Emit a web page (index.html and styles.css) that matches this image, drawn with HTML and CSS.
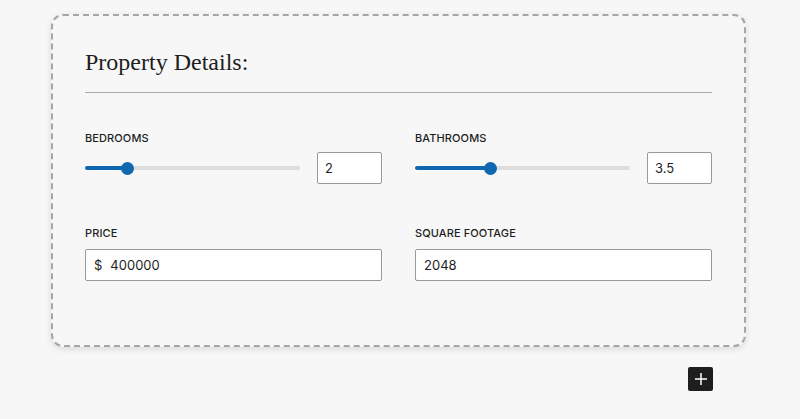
FILE: index.html
```html
<!DOCTYPE html>
<html lang="en">
<head>
<meta charset="utf-8">
<title>Property Details</title>
<link rel="stylesheet" href="styles.css">
</head>
<body>
<div class="wrap">
  <section class="card">
    <h2 class="title">Property Details:</h2>
    <hr class="sep">
    <div class="grid">
      <div class="field">
        <label class="label">Bedrooms</label>
        <div class="slider-row">
          <input class="range" type="range" min="0" max="1000" value="180" style="--p:19.9%">
          <input class="num" type="text" value="2">
        </div>
      </div>
      <div class="field">
        <label class="label">Bathrooms</label>
        <div class="slider-row">
          <input class="range" type="range" min="0" max="1000" value="342" style="--p:35.2%">
          <input class="num" type="text" value="3.5">
        </div>
      </div>
      <div class="field">
        <label class="label">Price</label>
        <div class="text-box"><span class="prefix">$</span><input class="plain" type="text" value="400000"></div>
      </div>
      <div class="field">
        <label class="label">Square Footage</label>
        <div class="text-box"><input class="plain" type="text" value="2048"></div>
      </div>
    </div>
  </section>
  <div class="add-row">
    <button class="add" type="button" aria-label="Add block">
      <svg width="24" height="24" viewBox="0 0 24 24"><path d="M12 6v12M6 12h12" stroke="#fff" stroke-width="1.5" fill="none"/></svg>
    </button>
  </div>
</div>
</body>
</html>
```

FILE: styles.css
```css
* { box-sizing: border-box; }
html, body { margin: 0; padding: 0; background: #f7f7f7; }
body { font-family: Inter, "Noto Sans", sans-serif; color: #1e1e1e; }

.wrap { padding: 14px 54px 0 51px; }

.card {
  border: 2px dashed #a6a6a6;
  border-radius: 12px;
  background: #f7f7f7;
  box-shadow: 0 2px 6px rgba(0,0,0,0.12);
  padding: 30px 32px 64px 32px;
}

.title {
  margin: 0;
  font-family: "Liberation Serif", serif;
  font-weight: 400;
  font-size: 24px;
  line-height: 32px;
  color: #1e1e1e;
}

.sep {
  margin: 14px 0 0 0;
  border: 0;
  border-top: 1px solid #a9a9a9;
  height: 0;
}

.grid {
  display: grid;
  grid-template-columns: 1fr 1fr;
  column-gap: 33px;
  row-gap: 41px;
  margin-top: 37px;
}

.field { display: flex; flex-direction: column; }

.label {
  font-size: 11px;
  font-weight: 500;
  text-transform: uppercase;
  line-height: 16px;
  margin-bottom: 6px;
  letter-spacing: 0.1px;
}
.field-lower .label { margin-bottom: 8px; }

.slider-row { display: flex; align-items: center; gap: 17px; }

.range {
  -webkit-appearance: none;
  appearance: none;
  flex: 1;
  margin: 0;
  height: 32px;
  background: transparent;
}
.range::-webkit-slider-runnable-track {
  height: 4px;
  border-radius: 2px;
  background: linear-gradient(to right, #1068b0 0, #1068b0 var(--p), #dddddd var(--p), #dddddd 100%);
}
.range::-webkit-slider-thumb {
  -webkit-appearance: none;
  width: 13px;
  height: 13px;
  margin-top: -4.5px;
  border-radius: 50%;
  background: #1068b0;
  border: 0;
}

.num, .text-box {
  height: 32px;
  border: 1px solid #9a9a9a;
  border-radius: 2px;
  background: #fff;
  font-family: Inter, "Noto Sans", sans-serif;
  font-size: 13px;
  color: #1e1e1e;
}
.num { width: 65px; padding: 0 7px; }

.text-box { display: flex; align-items: center; padding: 0 8px; margin-top: 2px; }
.prefix { font-size: 13px; margin-right: 8px; }
.plain {
  border: 0; outline: 0; padding: 0; background: transparent;
  font-family: inherit; font-size: 13px; color: inherit; flex: 1;
}

.add-row { display: flex; justify-content: flex-end; padding: 20px 33px 0 0; }
.add {
  width: 25px; height: 24px; padding: 0; border: 0;
  border-radius: 2px; background: #1e1e1e;
  display: flex; align-items: center; justify-content: center;
}
```
